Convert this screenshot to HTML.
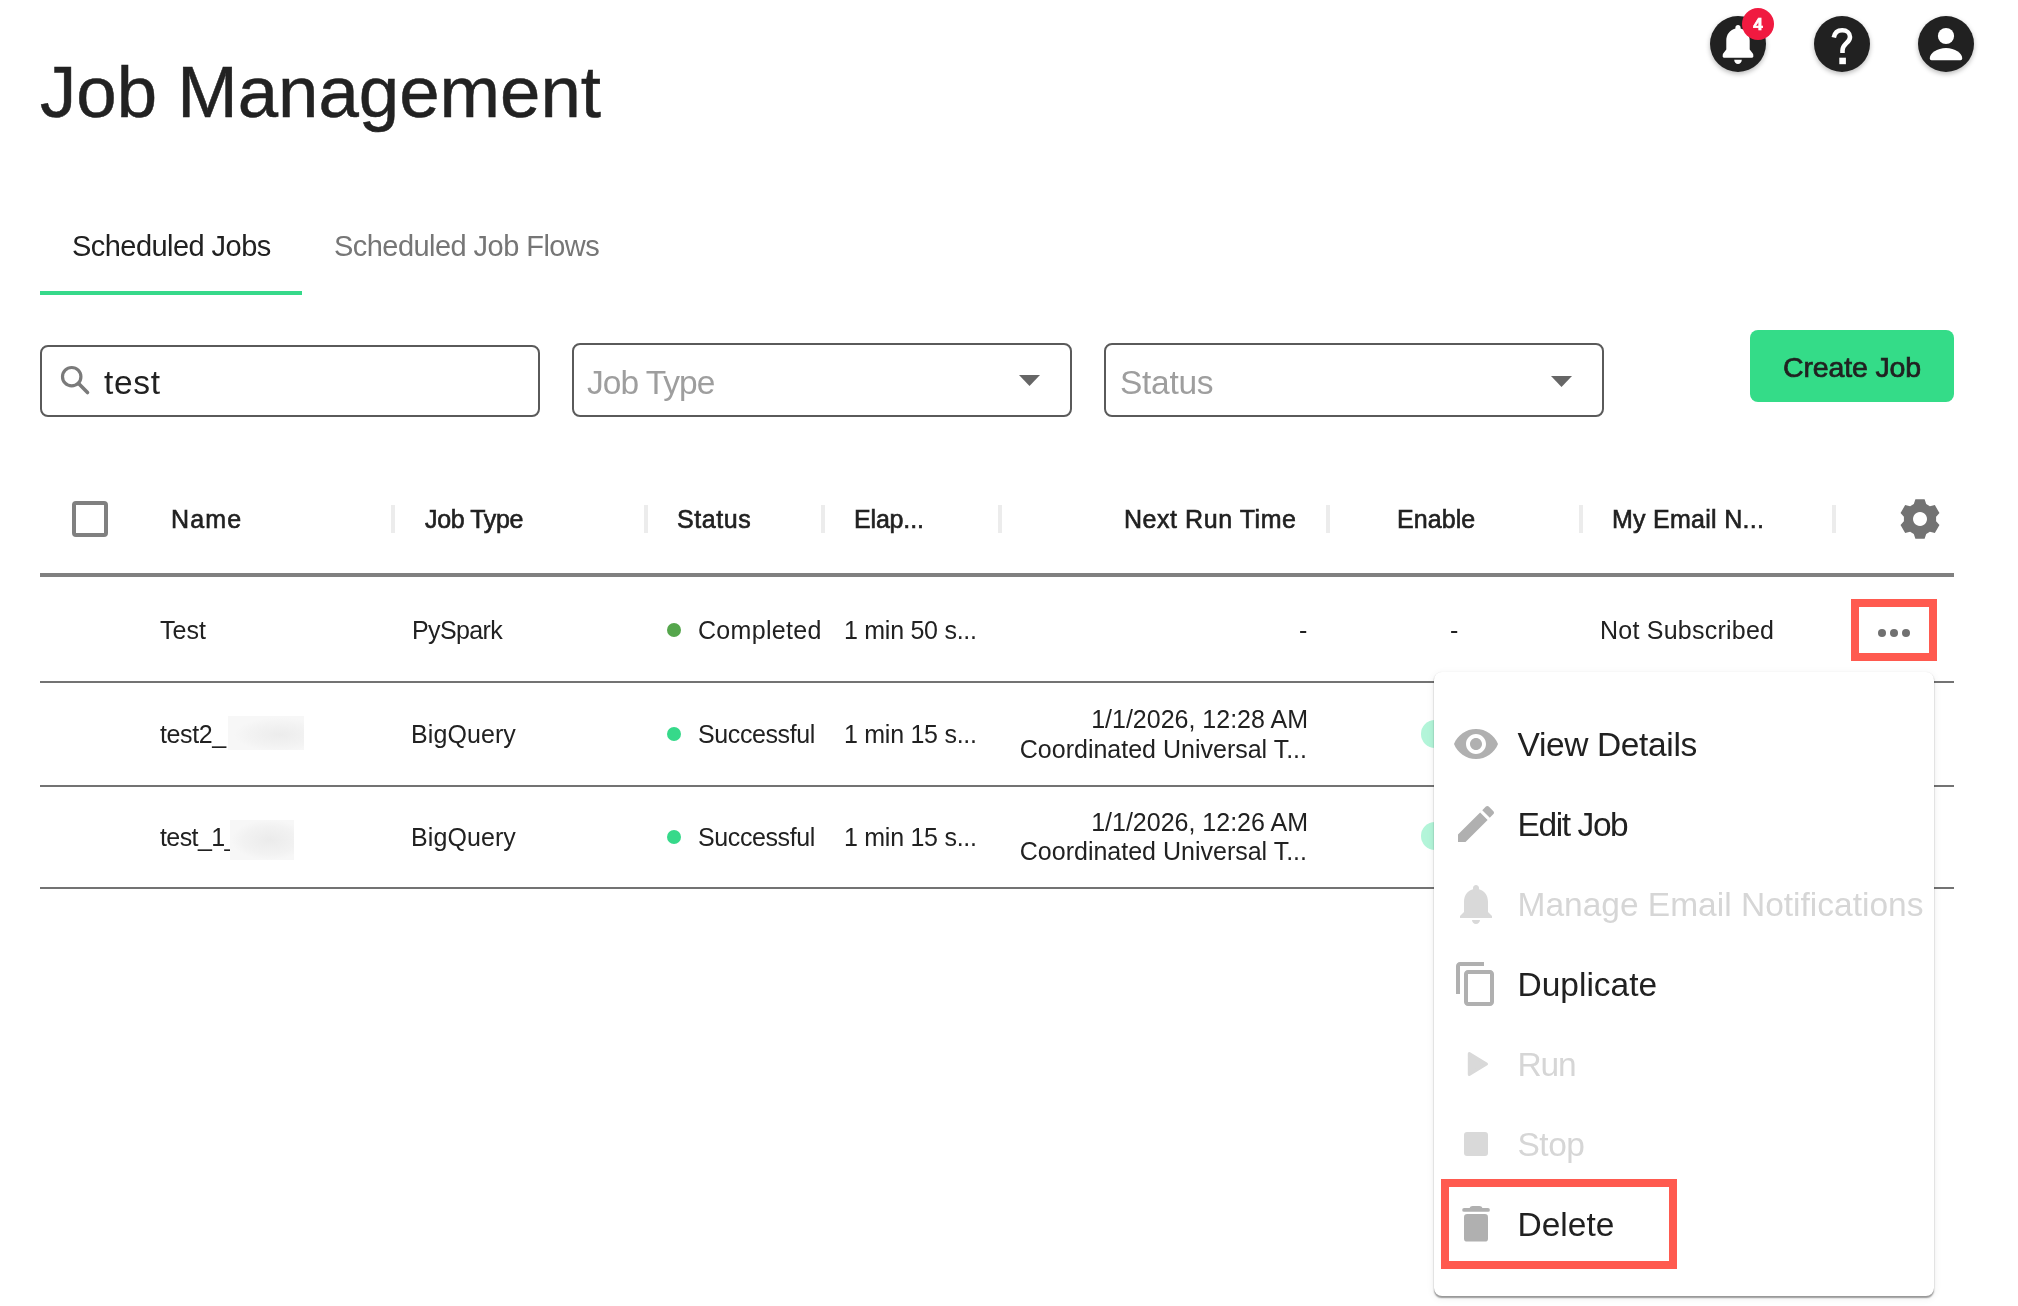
<!DOCTYPE html>
<html><head><meta charset="utf-8">
<style>
html,body{margin:0;padding:0;background:#fff;width:2018px;height:1306px;overflow:hidden;}
body{position:relative;will-change:transform;font-family:"Liberation Sans",sans-serif;color:#212121;}
.a{position:absolute;white-space:nowrap;line-height:1;}
.ln{position:absolute;}
.circ{position:absolute;width:56px;height:56px;border-radius:50%;background:#212121;box-shadow:0 2px 5px rgba(0,0,0,0.28);}
.box{position:absolute;box-sizing:border-box;border:2px solid #5a5a5a;border-radius:8px;}
.t24{font-size:25px;}
.h24{font-size:25px;-webkit-text-stroke:0.6px #212121;}
.sep{position:absolute;width:4px;height:28px;top:505px;background:#ececec;}
.rowline{position:absolute;left:40px;width:1914px;height:2px;background:#737373;}
.dot{position:absolute;width:14px;height:14px;border-radius:50%;}
.mi{position:absolute;left:1517.5px;font-size:33.5px;}
.ic{position:absolute;left:1452px;width:48px;height:48px;}
</style></head>
<body>
<!-- Title -->
<div class="a" id="title" style="left:40px;top:55.5px;font-size:72.6px;color:#222;-webkit-text-stroke:0.5px #222;">Job Management</div>

<!-- top right icons -->
<div class="circ" style="left:1710px;top:16px;">
  <svg width="56" height="56" viewBox="0 0 56 56" style="position:absolute;left:0;top:0">
    <path fill="#fff" d="M28 9c-1.5 0-2.6 1.1-2.6 2.5v1.1C19.6 14.1 16.3 18.9 16.3 24.6V33.6L13.2 37.6c-0.5 0.6-0.5 1.2-0.5 1.8v1.2c0 0.7 0.5 1.2 1.2 1.2H42.1c0.7 0 1.2-0.5 1.2-1.2v-1.2c0-0.6 0-1.2-0.5-1.8L39.7 33.6V24.6C39.7 18.9 36.4 14.1 30.6 12.6V11.5C30.6 10.1 29.5 9 28 9z M24.2 43.7h7.6c0 2.3-1.7 4.3-3.8 4.3s-3.8-2-3.8-4.3z"/>
  </svg>
</div>
<div style="position:absolute;left:1742px;top:8px;width:32px;height:32px;border-radius:50%;background:#F01A40;color:#fff;font-weight:bold;font-size:17px;line-height:33px;text-align:center;-webkit-text-stroke:0.7px #fff;">4</div>
<div class="circ" style="left:1814px;top:16px;">
  <svg width="56" height="56" viewBox="0 0 56 56" style="position:absolute;left:0;top:0">
    <path fill="none" stroke="#fff" stroke-width="4.6" d="M19.8 21.5c0.8-4.6 4-7.3 8.4-7.3 4.6 0 7.8 2.9 7.8 6.7 0 3.3-2.2 4.9-4.3 6.9-2 1.9-3.2 3.6-3.2 6.6v2.6"/>
    <rect x="25.3" y="41.7" width="6.6" height="6.5" fill="#fff"/>
  </svg>
</div>
<div class="circ" style="left:1918px;top:16px;">
  <svg width="56" height="56" viewBox="0 0 56 56" style="position:absolute;left:0;top:0">
    <circle cx="28" cy="20" r="8.1" fill="#fff"/>
    <path fill="#fff" d="M11.8 42c0-4.6 7.3-10 16.2-10s16.2 5.4 16.2 10v0.5c0 1-0.8 1.7-1.7 1.7H13.5c-1 0-1.7-0.8-1.7-1.7z"/>
  </svg>
</div>

<!-- Tabs -->
<div class="a" style="left:72px;top:232px;font-size:29px;letter-spacing:-0.55px;color:#212121;">Scheduled Jobs</div>
<div class="a" style="left:334px;top:232px;font-size:29px;letter-spacing:-0.55px;color:#767676;">Scheduled Job Flows</div>
<div class="ln" style="left:40px;top:291px;width:262px;height:4px;background:#36D98A;"></div>

<!-- Search & filters -->
<div class="box" style="left:40px;top:345px;width:500px;height:72px;"></div>
<svg style="position:absolute;left:56px;top:361px" width="40" height="40" viewBox="0 0 40 40">
  <circle cx="15.7" cy="15.7" r="9.2" fill="none" stroke="#7a7a7a" stroke-width="3.2"/>
  <line x1="22.6" y1="22.6" x2="31.5" y2="31.5" stroke="#7a7a7a" stroke-width="3.6" stroke-linecap="round"/>
</svg>
<div class="a" style="left:104px;top:366px;font-size:33.5px;letter-spacing:0.67px;color:#212121;">test</div>

<div class="box" style="left:572px;top:343px;width:500px;height:74px;"></div>
<div class="a" style="left:587px;top:366px;font-size:33.5px;letter-spacing:-1px;color:#9e9e9e;">Job Type</div>
<svg style="position:absolute;left:1019px;top:375px" width="22" height="12" viewBox="0 0 22 12"><path d="M0 0h21l-10.5 11z" fill="#666"/></svg>

<div class="box" style="left:1104px;top:343px;width:500px;height:74px;"></div>
<div class="a" style="left:1120px;top:366px;font-size:33.5px;letter-spacing:-0.28px;color:#9e9e9e;">Status</div>
<svg style="position:absolute;left:1551px;top:376px" width="22" height="12" viewBox="0 0 22 12"><path d="M0 0h21l-10.5 11z" fill="#666"/></svg>

<div style="position:absolute;left:1750px;top:330px;width:204px;height:72px;border-radius:8px;background:#34DC88;"></div>
<div class="a" style="left:1783px;top:352.5px;font-size:28.5px;letter-spacing:-0.15px;color:#212121;-webkit-text-stroke:0.7px #212121;">Create Job</div>

<!-- table header -->
<div style="position:absolute;left:72px;top:501px;width:36px;height:36px;box-sizing:border-box;border:4px solid #808080;border-radius:4px;"></div>
<div class="a h24" style="left:171px;top:507px;letter-spacing:1.13px;">Name</div>
<div class="sep" style="left:391px"></div>
<div class="a h24" style="left:425px;top:507px;letter-spacing:-0.37px;">Job Type</div>
<div class="sep" style="left:644px"></div>
<div class="a h24" style="left:677px;top:507px;letter-spacing:0.56px;">Status</div>
<div class="sep" style="left:821px"></div>
<div class="a h24" style="left:854px;top:507px;letter-spacing:-0.17px;">Elap...</div>
<div class="sep" style="left:998px"></div>
<div class="a h24" style="left:1124px;top:507px;letter-spacing:0.55px;">Next Run Time</div>
<div class="sep" style="left:1326px"></div>
<div class="a h24" style="left:1397px;top:507px;letter-spacing:0.08px;">Enable</div>
<div class="sep" style="left:1579px"></div>
<div class="a h24" style="left:1612px;top:507px;letter-spacing:0.27px;">My Email N...</div>
<div class="sep" style="left:1832px"></div>
<svg style="position:absolute;left:1900px;top:499px" width="40" height="40" viewBox="0 0 40 40">
  <path fill="#737373" fill-rule="evenodd" d="M13.80,5.00 L15.40,0.20 L24.60,0.20 L26.20,5.00 L29.89,7.13 L34.85,6.12 L39.45,14.08 L36.09,17.87 L36.09,22.13 L39.45,25.92 L34.85,33.88 L29.89,32.87 L26.20,35.00 L24.60,39.80 L15.40,39.80 L13.80,35.00 L10.11,32.87 L5.15,33.88 L0.55,25.92 L3.91,22.13 L3.91,17.87 L0.55,14.08 L5.15,6.12 L10.11,7.13Z M20 13a7 7 0 1 0 0.01 0z"/>
</svg>
<div class="ln" style="left:40px;top:573px;width:1914px;height:4px;background:#808080;"></div>

<!-- rows -->
<div class="rowline" style="top:681px"></div>
<div class="rowline" style="top:785px"></div>
<div class="rowline" style="top:887px"></div>

<!-- row 1 -->
<div class="a t24" style="left:160px;top:618px;">Test</div>
<div class="a t24" style="left:412px;top:618px;letter-spacing:-0.62px;">PySpark</div>
<div class="dot" style="left:667px;top:623px;background:#55A64C;"></div>
<div class="a t24" style="left:698px;top:618px;letter-spacing:0.3px;">Completed</div>
<div class="a t24" style="left:844px;top:618px;letter-spacing:-0.27px;">1 min 50 s...</div>
<div class="a t24" style="left:1299px;top:618px;">-</div>
<div class="a t24" style="left:1450px;top:618px;">-</div>
<div class="a t24" style="left:1600px;top:618px;letter-spacing:0.23px;">Not Subscribed</div>
<div style="position:absolute;left:1851px;top:599px;width:86px;height:62px;box-sizing:border-box;border:8px solid #FF5A4F;"></div>
<div class="dot" style="left:1878px;top:629px;width:8px;height:8px;background:#707070;"></div>
<div class="dot" style="left:1890px;top:629px;width:8px;height:8px;background:#707070;"></div>
<div class="dot" style="left:1902px;top:629px;width:8px;height:8px;background:#707070;"></div>

<!-- row 2 -->
<div class="a t24" style="left:160px;top:722px;letter-spacing:-0.4px;">test2_</div>
<div style="position:absolute;left:228px;top:716px;width:76px;height:34px;background:radial-gradient(ellipse 60% 50% at 68% 55%,#ececec,#f3f3f3 70%,#f7f7f7);"></div>
<div class="a t24" style="left:411px;top:722px;letter-spacing:0.09px;">BigQuery</div>
<div class="dot" style="left:667px;top:727px;background:#36D98A;"></div>
<div class="a t24" style="left:698px;top:722px;letter-spacing:-0.4px;">Successful</div>
<div class="a t24" style="left:844px;top:722px;letter-spacing:-0.27px;">1 min 15 s...</div>
<div class="a t24" style="left:1000px;top:707px;width:308px;text-align:right;">1/1/2026, 12:28 AM</div>
<div class="a t24" style="left:1000px;top:737px;width:307px;text-align:right;">Coordinated Universal T...</div>
<div style="position:absolute;left:1421px;top:720px;width:56px;height:28px;border-radius:14px;background:#B3F5D9;"></div>

<!-- row 3 -->
<div class="a t24" style="left:160px;top:825px;letter-spacing:-0.6px;">test_1_</div>
<div style="position:absolute;left:230px;top:820px;width:64px;height:40px;background:radial-gradient(ellipse 60% 50% at 62% 50%,#ebebeb,#f2f2f2 70%,#f7f7f7);"></div>
<div class="a t24" style="left:411px;top:825px;letter-spacing:0.09px;">BigQuery</div>
<div class="dot" style="left:667px;top:830px;background:#36D98A;"></div>
<div class="a t24" style="left:698px;top:825px;letter-spacing:-0.4px;">Successful</div>
<div class="a t24" style="left:844px;top:825px;letter-spacing:-0.27px;">1 min 15 s...</div>
<div class="a t24" style="left:1000px;top:810px;width:308px;text-align:right;">1/1/2026, 12:26 AM</div>
<div class="a t24" style="left:1000px;top:839px;width:307px;text-align:right;">Coordinated Universal T...</div>
<div style="position:absolute;left:1421px;top:822px;width:56px;height:28px;border-radius:14px;background:#B3F5D9;"></div>

<!-- menu -->
<div style="position:absolute;left:1434px;top:672px;width:500px;height:624px;background:#fff;border-radius:8px;box-shadow:0 2px 1.5px -0.5px rgba(0,0,0,0.38),0 0 1px rgba(0,0,0,0.10),0 2px 8px rgba(0,0,0,0.07);"></div>

<svg class="ic" style="top:720px" viewBox="0 0 24 24"><path fill="#b0b0b0" d="M12 4.5C7 4.5 2.730 7.610 1 12c1.730 4.390 6 7.500 11 7.500s9.270-3.110 11-7.500c-1.730-4.390-6-7.500-11-7.500zM12 17c-2.760 0-5-2.240-5-5s2.240-5 5-5 5 2.240 5 5-2.240 5-5 5zm0-8c-1.660 0-3 1.340-3 3s1.340 3 3 3 3-1.340 3-3-1.340-3-3-3z"/></svg>
<div class="a mi" style="top:728px;letter-spacing:-0.36px;">View Details</div>

<svg class="ic" style="top:800px" viewBox="0 0 24 24"><path fill="#b0b0b0" d="M3 17.25V21h3.75L17.81 9.94l-3.75-3.75L3 17.25zM20.71 7.04c.39-.39.39-1.02 0-1.41l-2.34-2.34c-.39-.39-1.02-.39-1.41 0l-1.83 1.83 3.750 3.750 1.830-1.830z"/></svg>
<div class="a mi" style="top:808px;letter-spacing:-1.4px;">Edit Job</div>

<svg class="ic" style="top:880px" viewBox="0 0 24 24"><path fill="#d9d9d9" d="M12 22c1.1 0 2-.9 2-2h-4c0 1.1.89 2 2 2zm6-6v-5c0-3.07-1.64-5.64-4.5-6.32V4c0-.83-.67-1.5-1.5-1.5s-1.5.67-1.5 1.5v.68C7.63 5.360 6 7.920 6 11v5l-2 2v1h16v-1l-2-2z"/></svg>
<div class="a mi" style="top:888px;color:#d6d6d6;">Manage Email Notifications</div>

<svg class="ic" style="top:960px" viewBox="0 0 24 24"><path fill="#b0b0b0" d="M16 1H4c-1.1 0-2 .9-2 2v14h2V3h12V1zm3 4H8c-1.1 0-2 .9-2 2v14c0 1.1.9 2 2 2h11c1.1 0 2-.9 2-2V7c0-1.1-.9-2-2-2zm0 16H8V7h11v14z"/></svg>
<div class="a mi" style="top:968px;">Duplicate</div>

<svg class="ic" style="top:1040px" viewBox="0 0 48 48"><path fill="#d9d9d9" stroke="#d9d9d9" stroke-width="3" stroke-linejoin="round" d="M17.3 13.5V34.5L34.5 24z"/></svg>
<div class="a mi" style="top:1048px;color:#d6d6d6;letter-spacing:-1.2px;">Run</div>

<svg class="ic" style="top:1120px" viewBox="0 0 24 24"><rect x="6" y="6" width="12" height="12" rx="1.5" fill="#d9d9d9"/></svg>
<div class="a mi" style="top:1128px;color:#d6d6d6;letter-spacing:-0.5px;">Stop</div>

<svg class="ic" style="top:1200px" viewBox="0 0 48 48"><rect x="10.2" y="8" width="27.7" height="3.8" rx="1.9" fill="#b0b0b0"/><path d="M17.5 8.6c0.3-1.8 1.6-2.6 3.2-2.6h6.6c1.6 0 2.9 0.8 3.2 2.6z" fill="#b0b0b0"/><rect x="12" y="14" width="24" height="27.6" rx="3.2" fill="#b0b0b0"/></svg>
<div class="a mi" style="top:1208px;">Delete</div>
<div style="position:absolute;left:1441px;top:1179px;width:236px;height:90px;box-sizing:border-box;border:8px solid #FF5A4F;"></div>

</body></html>
